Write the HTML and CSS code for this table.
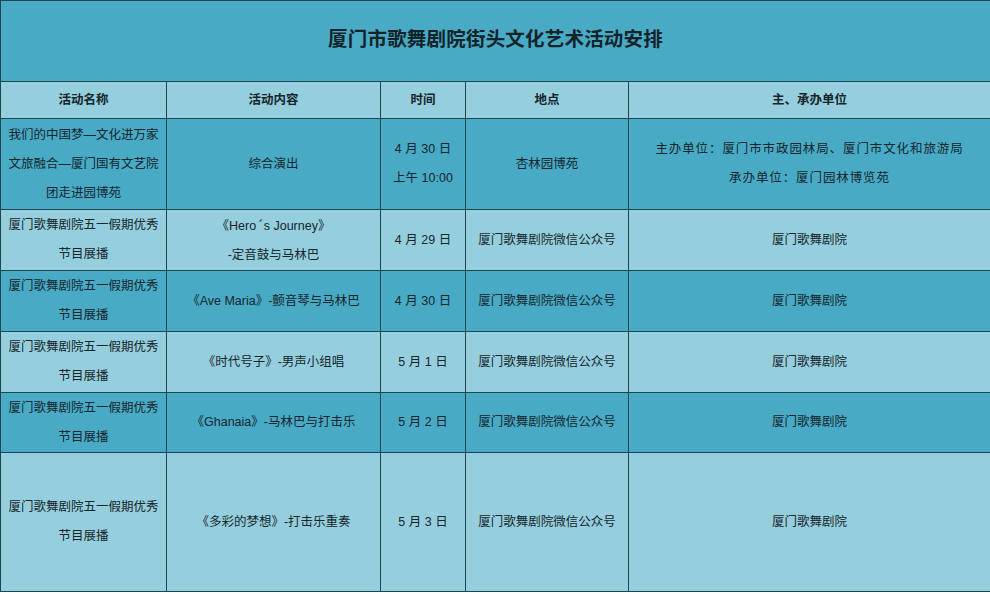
FILE: index.html
```html
<!DOCTYPE html>
<html lang="zh">
<head>
<meta charset="utf-8">
<title>厦门市歌舞剧院街头文化艺术活动安排</title>
<link rel="stylesheet" href="styles.css">
</head>
<body>
<table class="schedule">
  <colgroup>
    <col class="c1"><col class="c2"><col class="c3"><col class="c4"><col class="c5">
  </colgroup>
  <tr class="title-row dark"><td colspan="5" class="title">厦门市歌舞剧院街头文化艺术活动安排</td></tr>
  <tr class="head-row light">
    <th>活动名称</th><th>活动内容</th><th>时间</th><th>地点</th><th>主、承办单位</th>
  </tr>
  <tr class="r1 dark">
    <td>我们的中国梦—文化进万家<br>文旅融合—厦门国有文艺院<br>团走进园博苑</td>
    <td>综合演出</td>
    <td>4 月 30 日<br>上午 10:00</td>
    <td>杏林园博苑</td>
    <td class="org">主办单位：厦门市市政园林局、厦门市文化和旅游局<br>承办单位：厦门园林博览苑</td>
  </tr>
  <tr class="r2 light">
    <td>厦门歌舞剧院五一假期优秀<br>节目展播</td>
    <td>《Hero<span class="cjk">´</span>s Journey》<br>-定音鼓与马林巴</td>
    <td>4 月 29 日</td>
    <td>厦门歌舞剧院微信公众号</td>
    <td>厦门歌舞剧院</td>
  </tr>
  <tr class="r3 dark">
    <td>厦门歌舞剧院五一假期优秀<br>节目展播</td>
    <td>《Ave Maria》-颤音琴与马林巴</td>
    <td>4 月 30 日</td>
    <td>厦门歌舞剧院微信公众号</td>
    <td>厦门歌舞剧院</td>
  </tr>
  <tr class="r4 light">
    <td>厦门歌舞剧院五一假期优秀<br>节目展播</td>
    <td>《时代号子》-男声小组唱</td>
    <td>5 月 1 日</td>
    <td>厦门歌舞剧院微信公众号</td>
    <td>厦门歌舞剧院</td>
  </tr>
  <tr class="r5 dark">
    <td>厦门歌舞剧院五一假期优秀<br>节目展播</td>
    <td>《Ghanaia》-马林巴与打击乐</td>
    <td>5 月 2 日</td>
    <td>厦门歌舞剧院微信公众号</td>
    <td>厦门歌舞剧院</td>
  </tr>
  <tr class="r6 light">
    <td>厦门歌舞剧院五一假期优秀<br>节目展播</td>
    <td>《多彩的梦想》-打击乐重奏</td>
    <td>5 月 3 日</td>
    <td>厦门歌舞剧院微信公众号</td>
    <td>厦门歌舞剧院</td>
  </tr>
</table>
</body>
</html>
```

FILE: styles.css
```css
html, body {
  margin: 0;
  padding: 0;
  background: #ffffff;
}
body {
  width: 990px;
  height: 596px;
  overflow: hidden;
  font-family: "Liberation Sans", "Noto Sans CJK SC", sans-serif;
  color: #17262c;
}
.cjk {
  font-family: "Noto Sans CJK SC", sans-serif;
}
.schedule {
  width: 990px;
  border-collapse: collapse;
  table-layout: fixed;
  font-size: 12.5px;
  line-height: 29px;
}
.c1 { width: 166px; }
.c2 { width: 214px; }
.c3 { width: 85px; }
.c4 { width: 163px; }
.c5 { width: 362px; }
.schedule td, .schedule th {
  border: 1px solid #1d4655;
  text-align: center;
  vertical-align: middle;
  padding: 0;
}
.dark { background: #48aac5; }
.light { background: #95cedd; }
.title-row { height: 81px; }
.title {
  font-size: 19.5px;
  font-weight: bold;
  letter-spacing: 0.2px;
  color: #13232a;
  padding-bottom: 4px !important;
}
.head-row { height: 37px; }
.head-row th {
  font-weight: bold;
  font-size: 12.5px;
}
.r1 { height: 91px; }
.r2 { height: 61px; }
.r3 { height: 61px; }
.r4 { height: 61px; }
.r5 { height: 60px; }
.r6 { height: 139px; }
.org {
  letter-spacing: 0.9px;
}
```
